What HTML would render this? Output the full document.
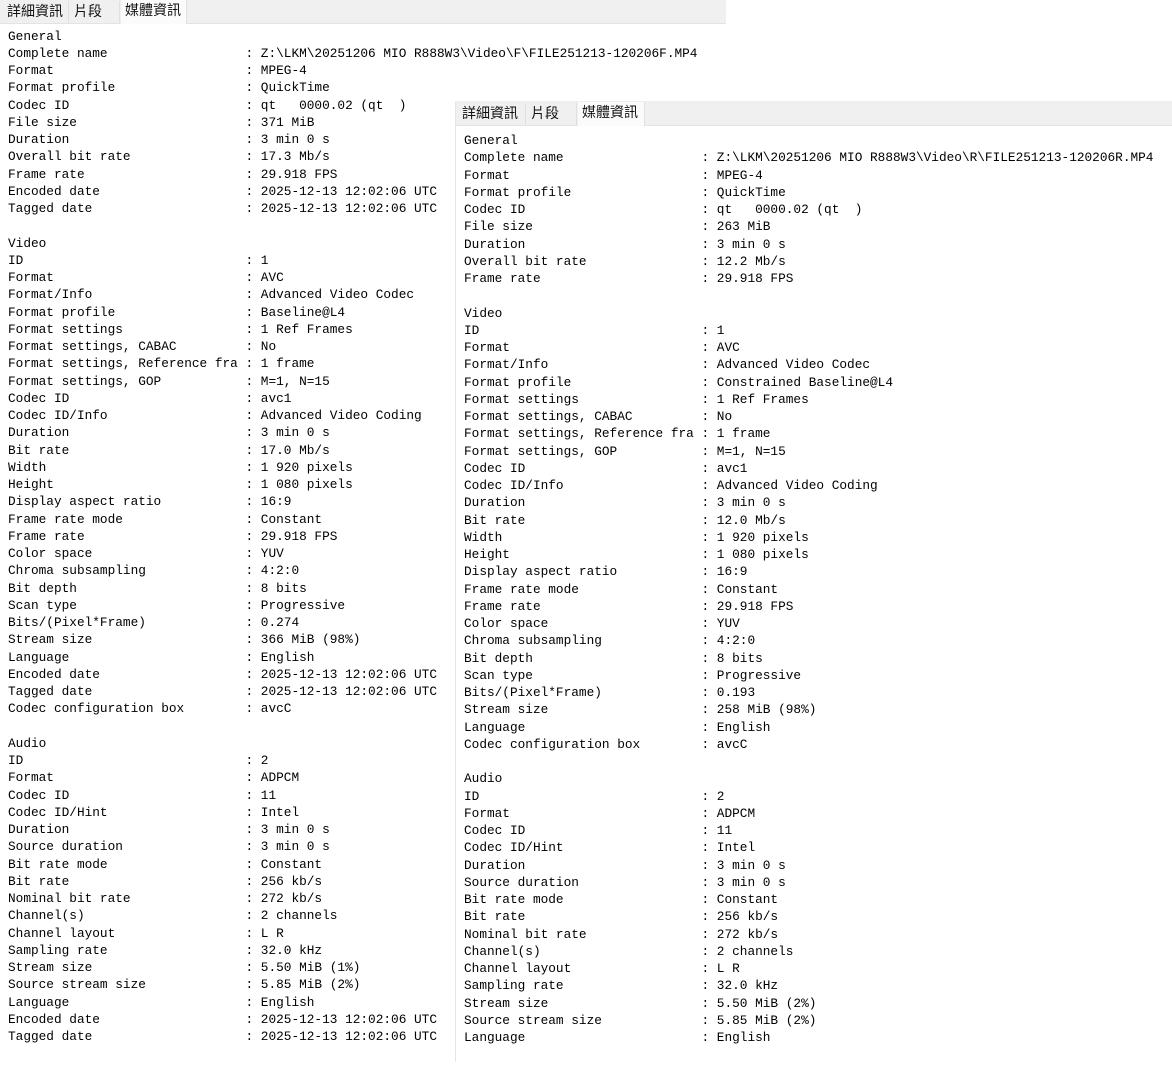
<!DOCTYPE html>
<html><head><meta charset="utf-8"><style>
html,body{margin:0;padding:0;width:1172px;height:1066px;background:#fff;overflow:hidden;position:relative}
.win{position:absolute;background:#fff}
.bar{position:absolute;left:0;top:0;height:23px;background:#f0f0f0;border-bottom:1px solid #e3e3e3}
.tab{position:absolute;top:1px;height:22px;line-height:21px;font:14px "Liberation Sans","Noto Sans CJK TC",sans-serif;color:#111;box-sizing:border-box;padding-left:4px;border-right:1px solid #e0e0e0}
.tab.act{background:#fbfbfb;top:0;height:24px}
pre{position:absolute;margin:0;font:12.78px/17.25px "Liberation Mono",monospace;color:#000;white-space:pre}
</style></head><body>
<div class="win" style="left:0;top:0;width:726px;height:1066px">
 <div class="bar" style="width:726px"></div>
 <div class="tab" style="left:3px;width:66px">詳細資訊</div>
 <div class="tab" style="left:70px;width:50px">片段</div>
 <div class="tab act" style="left:121px;width:66px">媒體資訊</div>
<pre style="left:8px;top:27.5px">General
Complete name                  : Z:\LKM\20251206 MIO R888W3\Video\F\FILE251213-120206F.MP4
Format                         : MPEG-4
Format profile                 : QuickTime
Codec ID                       : qt   0000.02 (qt  )
File size                      : 371 MiB
Duration                       : 3 min 0 s
Overall bit rate               : 17.3 Mb/s
Frame rate                     : 29.918 FPS
Encoded date                   : 2025-12-13 12:02:06 UTC
Tagged date                    : 2025-12-13 12:02:06 UTC

Video
ID                             : 1
Format                         : AVC
Format/Info                    : Advanced Video Codec
Format profile                 : Baseline@L4
Format settings                : 1 Ref Frames
Format settings, CABAC         : No
Format settings, Reference fra : 1 frame
Format settings, GOP           : M=1, N=15
Codec ID                       : avc1
Codec ID/Info                  : Advanced Video Coding
Duration                       : 3 min 0 s
Bit rate                       : 17.0 Mb/s
Width                          : 1 920 pixels
Height                         : 1 080 pixels
Display aspect ratio           : 16:9
Frame rate mode                : Constant
Frame rate                     : 29.918 FPS
Color space                    : YUV
Chroma subsampling             : 4:2:0
Bit depth                      : 8 bits
Scan type                      : Progressive
Bits/(Pixel*Frame)             : 0.274
Stream size                    : 366 MiB (98%)
Language                       : English
Encoded date                   : 2025-12-13 12:02:06 UTC
Tagged date                    : 2025-12-13 12:02:06 UTC
Codec configuration box        : avcC

Audio
ID                             : 2
Format                         : ADPCM
Codec ID                       : 11
Codec ID/Hint                  : Intel
Duration                       : 3 min 0 s
Source duration                : 3 min 0 s
Bit rate mode                  : Constant
Bit rate                       : 256 kb/s
Nominal bit rate               : 272 kb/s
Channel(s)                     : 2 channels
Channel layout                 : L R
Sampling rate                  : 32.0 kHz
Stream size                    : 5.50 MiB (1%)
Source stream size             : 5.85 MiB (2%)
Language                       : English
Encoded date                   : 2025-12-13 12:02:06 UTC
Tagged date                    : 2025-12-13 12:02:06 UTC</pre>
</div>
<div class="win" style="left:455px;top:101px;width:717px;height:960px;border-left:1px solid #e6e6e6;border-top:1px solid #eee">
 <div class="bar" style="width:717px"></div>
 <div class="tab" style="left:2px;width:68px">詳細資訊</div>
 <div class="tab" style="left:71px;width:50px">片段</div>
 <div class="tab act" style="left:122px;width:67px">媒體資訊</div>
<pre style="left:8px;top:30px">General
Complete name                  : Z:\LKM\20251206 MIO R888W3\Video\R\FILE251213-120206R.MP4
Format                         : MPEG-4
Format profile                 : QuickTime
Codec ID                       : qt   0000.02 (qt  )
File size                      : 263 MiB
Duration                       : 3 min 0 s
Overall bit rate               : 12.2 Mb/s
Frame rate                     : 29.918 FPS

Video
ID                             : 1
Format                         : AVC
Format/Info                    : Advanced Video Codec
Format profile                 : Constrained Baseline@L4
Format settings                : 1 Ref Frames
Format settings, CABAC         : No
Format settings, Reference fra : 1 frame
Format settings, GOP           : M=1, N=15
Codec ID                       : avc1
Codec ID/Info                  : Advanced Video Coding
Duration                       : 3 min 0 s
Bit rate                       : 12.0 Mb/s
Width                          : 1 920 pixels
Height                         : 1 080 pixels
Display aspect ratio           : 16:9
Frame rate mode                : Constant
Frame rate                     : 29.918 FPS
Color space                    : YUV
Chroma subsampling             : 4:2:0
Bit depth                      : 8 bits
Scan type                      : Progressive
Bits/(Pixel*Frame)             : 0.193
Stream size                    : 258 MiB (98%)
Language                       : English
Codec configuration box        : avcC

Audio
ID                             : 2
Format                         : ADPCM
Codec ID                       : 11
Codec ID/Hint                  : Intel
Duration                       : 3 min 0 s
Source duration                : 3 min 0 s
Bit rate mode                  : Constant
Bit rate                       : 256 kb/s
Nominal bit rate               : 272 kb/s
Channel(s)                     : 2 channels
Channel layout                 : L R
Sampling rate                  : 32.0 kHz
Stream size                    : 5.50 MiB (2%)
Source stream size             : 5.85 MiB (2%)
Language                       : English</pre>
</div>
</body></html>
